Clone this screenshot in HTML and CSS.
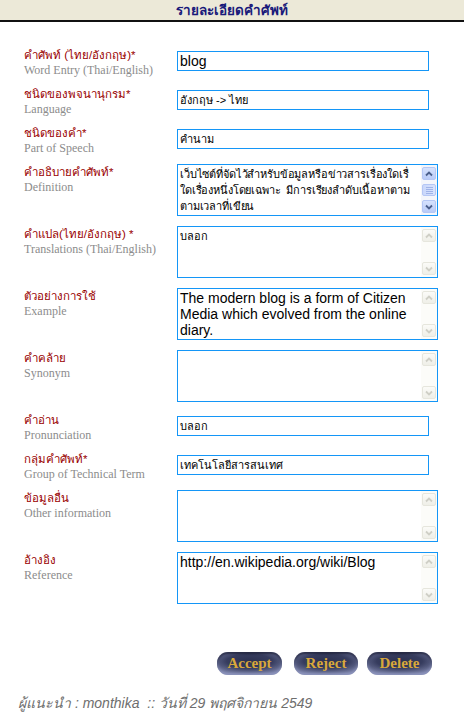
FILE: index.html
```html
<!DOCTYPE html>
<html lang="th">
<head>
<meta charset="utf-8">
<title>รายละเอียดคำศัพท์</title>
<link rel="stylesheet" href="styles.css">
</head>
<body>
<div class="header"><span class="title">รายละเอียดคำศัพท์</span></div>

<div class="form">
  <div class="label"><div class="th">คำศัพท์ (ไทย/อังกฤษ)*</div><div class="en">Word Entry (Thai/English)</div></div>
  <div class="field"><div class="input latin">blog</div></div>

  <div class="label"><div class="th">ชนิดของพจนานุกรม*</div><div class="en">Language</div></div>
  <div class="field"><div class="input">อังกฤษ -&gt; ไทย</div></div>

  <div class="label"><div class="th">ชนิดของคำ*</div><div class="en">Part of Speech</div></div>
  <div class="field"><div class="input">คำนาม</div></div>

  <div class="label ta"><div class="th">คำอธิบายคำศัพท์*</div><div class="en">Definition</div></div>
  <div class="field">
    <div class="textarea">
      <div class="content lines">เว็บไซต์ที่จัดไว้สำหรับข้อมูลหรือข่าวสารเรื่องใดเรื่<br>ใดเรื่องหนึ่งโดยเฉพาะ&nbsp; มีการเรียงลำดับเนื้อหาตาม<br>ตามเวลาที่เขียน</div>
      <div class="sb active">
        <div class="sbtn"><svg viewBox="0 0 10 10" class="arr"><path d="M2 6.5 L5 3.5 L8 6.5"/></svg></div>
        <div class="thumb"><span></span><span></span><span></span><span></span></div>
        <div class="sbtn"><svg viewBox="0 0 10 10" class="arr"><path d="M2 3.5 L5 6.5 L8 3.5"/></svg></div>
      </div>
    </div>
  </div>

  <div class="label ta"><div class="th">คำแปล(ไทย/อังกฤษ) *</div><div class="en">Translations (Thai/English)</div></div>
  <div class="field">
    <div class="textarea">
      <div class="content">บลอก</div>
      <div class="sb">
        <div class="sbtn"><svg viewBox="0 0 10 10" class="arr"><path d="M2 6.5 L5 3.5 L8 6.5"/></svg></div>
        <div class="sbtn"><svg viewBox="0 0 10 10" class="arr"><path d="M2 3.5 L5 6.5 L8 3.5"/></svg></div>
      </div>
    </div>
  </div>

  <div class="label ta"><div class="th">ตัวอย่างการใช้</div><div class="en">Example</div></div>
  <div class="field">
    <div class="textarea">
      <div class="content latin">The modern blog is a form of Citizen Media which evolved from the online diary.</div>
      <div class="sb">
        <div class="sbtn"><svg viewBox="0 0 10 10" class="arr"><path d="M2 6.5 L5 3.5 L8 6.5"/></svg></div>
        <div class="sbtn"><svg viewBox="0 0 10 10" class="arr"><path d="M2 3.5 L5 6.5 L8 3.5"/></svg></div>
      </div>
    </div>
  </div>

  <div class="label ta"><div class="th">คำคล้าย</div><div class="en">Synonym</div></div>
  <div class="field">
    <div class="textarea">
      <div class="content"></div>
      <div class="sb">
        <div class="sbtn"><svg viewBox="0 0 10 10" class="arr"><path d="M2 6.5 L5 3.5 L8 6.5"/></svg></div>
        <div class="sbtn"><svg viewBox="0 0 10 10" class="arr"><path d="M2 3.5 L5 6.5 L8 3.5"/></svg></div>
      </div>
    </div>
  </div>

  <div class="label"><div class="th">คำอ่าน</div><div class="en">Pronunciation</div></div>
  <div class="field"><div class="input">บลอก</div></div>

  <div class="label"><div class="th">กลุ่มคำศัพท์*</div><div class="en">Group of Technical Term</div></div>
  <div class="field"><div class="input">เทคโนโลยีสารสนเทศ</div></div>

  <div class="label ta"><div class="th">ข้อมูลอื่น</div><div class="en">Other information</div></div>
  <div class="field">
    <div class="textarea">
      <div class="content"></div>
      <div class="sb">
        <div class="sbtn"><svg viewBox="0 0 10 10" class="arr"><path d="M2 6.5 L5 3.5 L8 6.5"/></svg></div>
        <div class="sbtn"><svg viewBox="0 0 10 10" class="arr"><path d="M2 3.5 L5 6.5 L8 3.5"/></svg></div>
      </div>
    </div>
  </div>

  <div class="label ta"><div class="th">อ้างอิง</div><div class="en">Reference</div></div>
  <div class="field">
    <div class="textarea">
      <div class="content latin">http://en.wikipedia.org/wiki/Blog</div>
      <div class="sb">
        <div class="sbtn"><svg viewBox="0 0 10 10" class="arr"><path d="M2 6.5 L5 3.5 L8 6.5"/></svg></div>
        <div class="sbtn"><svg viewBox="0 0 10 10" class="arr"><path d="M2 3.5 L5 6.5 L8 3.5"/></svg></div>
      </div>
    </div>
  </div>
</div>

<div class="buttons">
  <button class="btn accept">Accept</button>
  <button class="btn reject">Reject</button>
  <button class="btn delete">Delete</button>
</div>

<div class="footer">ผู้แนะนำ : monthika&nbsp; :: วันที่ 29 พฤศจิกายน 2549</div>
<div class="bottomline"></div>
</body>
</html>
```

FILE: styles.css
```css
html, body {
  margin: 0;
  padding: 0;
  background: #ffffff;
}
body {
  width: 464px;
  height: 714px;
  overflow: hidden;
  font-family: "Liberation Sans", "Noto Sans", sans-serif;
  font-size: 12px;
  color: #000;
}
.header {
  height: 20px;
  background: #ece9d8;
  border-bottom: 2px solid #111;
  display: flex;
  align-items: center;
  justify-content: center;
}
.title {
  font-weight: bold;
  font-size: 13.5px;
  color: #1a1a7a;
}
.form {
  margin-top: 29px;
  padding-left: 24px;
  display: grid;
  grid-template-columns: 153px 261px;
  grid-template-rows: 39px 39px 35px 62px 62px 62px 66px 39px 35px 62px 52px;
}
.label {
  margin-top: -3px;
  line-height: 15px;
}
.label.ta {
  margin-top: 1px;
}
.th {
  color: #990000;
  font-size: 11.5px;
}
.en {
  color: #8c8c8c;
  font-family: "Liberation Serif", serif;
  font-size: 12px;
}
.input {
  box-sizing: border-box;
  width: 252px;
  height: 20px;
  border: 1px solid #1496f7;
  padding: 0 2px;
  line-height: 18px;
  font-size: 11px;
  white-space: nowrap;
  overflow: hidden;
}
.input.latin {
  font-size: 14px;
}
.textarea {
  box-sizing: border-box;
  width: 261px;
  height: 52px;
  border: 1px solid #1496f7;
  display: flex;
}
.content {
  flex: 1;
  min-width: 0;
  padding: 1px 2px;
  line-height: 16px;
  font-size: 11px;
  overflow: hidden;
}
.content.lines {
  white-space: nowrap;
  letter-spacing: -0.15px;
}
.content.latin {
  font-size: 14px;
}
.sb {
  flex: none;
  width: 16px;
  background: #fcfcf9;
  display: flex;
  flex-direction: column;
  justify-content: space-between;
  padding: 2px 1px;
  box-sizing: border-box;
}
.sbtn {
  box-sizing: border-box;
  width: 14px;
  height: 13px;
  border: 1px solid #e6e6dd;
  border-radius: 2px;
  background: linear-gradient(#fbfbf8, #efefe8);
  display: flex;
  align-items: center;
  justify-content: center;
}
.arr {
  width: 10px;
  height: 10px;
}
.arr path {
  fill: none;
  stroke: #cfcfc6;
  stroke-width: 1.8;
}
.sb.active {
  background: #f4f6fb;
}
.sb.active .sbtn {
  border-color: #b5c7f5;
  background: linear-gradient(#d6e2fd, #b9cbf8);
}
.sb.active .arr path {
  stroke: #4b5f8c;
}
.thumb {
  box-sizing: border-box;
  width: 14px;
  height: 12px;
  border: 1px solid #b5c7f5;
  border-radius: 2px;
  background: linear-gradient(90deg, #c9d7fb, #d9e4fd);
  display: flex;
  flex-direction: column;
  justify-content: center;
  align-items: center;
  gap: 1px;
}
.thumb span {
  width: 7px;
  height: 1px;
  background: #9fb3e8;
}
.buttons {
  margin-top: 48px;
  padding-right: 32px;
  display: flex;
  justify-content: flex-end;
}
.btn {
  box-sizing: border-box;
  width: 65px;
  height: 23px;
  padding: 0;
  border: none;
  border-radius: 11px;
  background: radial-gradient(ellipse 70% 60% at 50% 40%, #2b3050 0%, #363c5e 50%, #7d84ab 100%);
  box-shadow: inset 0 -2px 3px rgba(150, 158, 200, 0.6), inset 0 2px 2px rgba(10, 12, 30, 0.6);
  color: #d8a83b;
  font-family: "Liberation Serif", serif;
  font-weight: bold;
  font-size: 15px;
  line-height: 23px;
}
.accept { margin-right: 12px; }
.reject { width: 64px; margin-right: 9px; }
.footer {
  margin-top: 20px;
  padding-left: 18px;
  font-style: italic;
  font-size: 14px;
  color: #6e6e6e;
  line-height: 16px;
}
.bottomline {
  margin-top: 3px;
  height: 1px;
  background: #e2e8d6;
}
```
